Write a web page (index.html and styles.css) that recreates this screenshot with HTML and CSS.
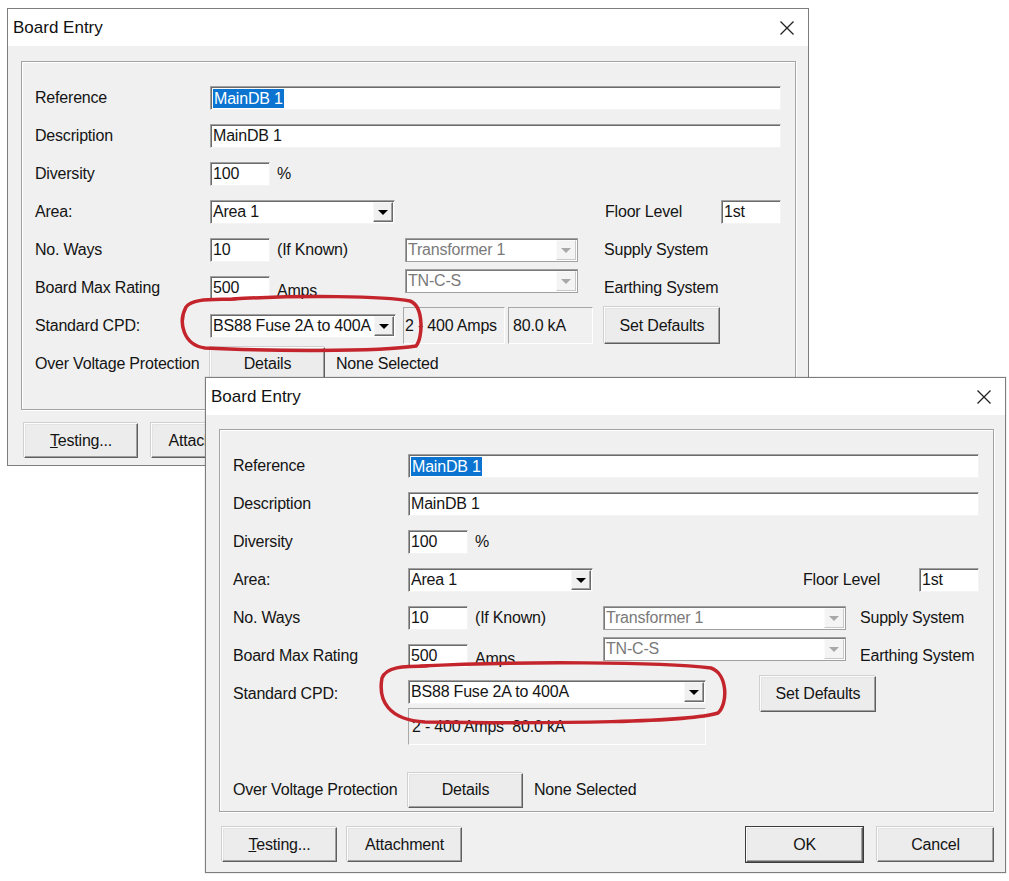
FILE: index.html
```html
<!DOCTYPE html>
<html lang="en">
<head>
<meta charset="utf-8">
<title>Board Entry</title>
<link rel="stylesheet" href="styles.css">
</head>
<body>
<div class="desk">

  <section class="win win-back">
    <header class="titlebar">
      <span class="title">Board Entry</span>
      <svg class="close" viewBox="0 0 14 14" width="14" height="14"><path d="M0.5 0.5 L13.5 13.5 M13.5 0.5 L0.5 13.5" stroke="#222" stroke-width="1.3" fill="none"/></svg>
    </header>
    <div class="client client-back">
      <div class="group group-back">
        <div class="form form-back">
          <span class="lbl">Reference</span>
          <div class="field span-all"><span class="sel">MainDB 1</span></div>

          <span class="lbl">Description</span>
          <div class="field span-all">MainDB 1</div>

          <span class="lbl">Diversity</span>
          <div class="pair"><div class="field short">100</div><span>%</span></div>

          <span class="lbl">Area:</span>
          <div class="field combo area"><span class="ctext">Area 1</span><span class="drop"></span></div>
          <div class="floor"><span>Floor Level</span><div class="field short">1st</div></div>

          <span class="lbl">No. Ways</span>
          <div class="pair"><div class="field short">10</div><span>(If Known)</span></div>
          <div class="field combo dis dis-back"><span class="ctext">Transformer 1</span><span class="drop"></span></div>
          <span class="side">Supply System</span>

          <span class="lbl">Board Max Rating</span>
          <div class="pair"><div class="field short">500</div><span class="low">Amps</span></div>
          <div class="field combo dis dis-back top"><span class="ctext">TN-C-S</span><span class="drop"></span></div>
          <span class="side">Earthing System</span>

          <span class="lbl">Standard CPD:</span>
          <div class="field combo cpd-back"><span class="ctext">BS88 Fuse 2A to 400A</span><span class="drop"></span></div>
          <div class="statics"><div class="static st-a">2 - 400 Amps</div><div class="static st-b">80.0 kA</div></div>
          <div class="btn btn-set">Set Defaults</div>

          <span class="lbl">Over Voltage Protection</span>
          <div class="ovp"><div class="btn btn-det">Details</div><span>None Selected</span></div>
        </div>
      </div>
      <div class="btnrow btnrow-back">
        <div class="btn"><span><u>T</u>esting...</span></div>
        <div class="btn">Attachment</div>
      </div>
    </div>
  </section>

  <section class="win win-front">
    <header class="titlebar">
      <span class="title">Board Entry</span>
      <svg class="close" viewBox="0 0 14 14" width="14" height="14"><path d="M0.5 0.5 L13.5 13.5 M13.5 0.5 L0.5 13.5" stroke="#222" stroke-width="1.3" fill="none"/></svg>
    </header>
    <div class="client client-front">
      <div class="group group-front">
        <div class="form form-front">
          <span class="lbl">Reference</span>
          <div class="field span-all"><span class="sel">MainDB 1</span></div>

          <span class="lbl">Description</span>
          <div class="field span-all">MainDB 1</div>

          <span class="lbl">Diversity</span>
          <div class="pair"><div class="field short">100</div><span>%</span></div>

          <span class="lbl">Area:</span>
          <div class="field combo area"><span class="ctext">Area 1</span><span class="drop"></span></div>
          <div class="floor"><span>Floor Level</span><div class="field short">1st</div></div>

          <span class="lbl">No. Ways</span>
          <div class="pair"><div class="field short">10</div><span>(If Known)</span></div>
          <div class="field combo dis dis-front"><span class="ctext">Transformer 1</span><span class="drop"></span></div>
          <span class="side">Supply System</span>

          <span class="lbl">Board Max Rating</span>
          <div class="pair"><div class="field short">500</div><span class="low">Amps</span></div>
          <div class="field combo dis dis-front top"><span class="ctext">TN-C-S</span><span class="drop"></span></div>
          <span class="side">Earthing System</span>

          <span class="lbl">Standard CPD:</span>
          <div class="cpd-block">
            <div class="cpd-col">
              <div class="field combo cpd-front"><span class="ctext">BS88 Fuse 2A to 400A</span><span class="drop"></span></div>
              <div class="static st-wide">2 - 400 Amps  80.0 kA</div>
            </div>
            <div class="btn btn-set btn-set-front">Set Defaults</div>
          </div>

          <span class="lbl r9">Over Voltage Protection</span>
          <div class="ovp r9"><div class="btn btn-det">Details</div><span>None Selected</span></div>
        </div>
      </div>
      <div class="btnrow btnrow-front">
        <div class="btn btn-w"><span><u>T</u>esting...</span></div>
        <div class="btn btn-w">Attachment</div>
        <div class="btnrow-right">
          <div class="btn btn-ok btn-default">OK</div>
          <div class="btn btn-ok">Cancel</div>
        </div>
      </div>
    </div>
  </section>

  <svg class="ink" viewBox="0 0 1009 881" width="1009" height="881">
    <path d="M232 299 C300 295 385 296 410 301 C424 306 423 338 416 346 C380 352 260 351 205 348 C183 345 178 322 186 307 C193 298 212 300 236 299" />
    <path d="M420 666 C520 661 660 662 711 668 C728 674 728 704 718 713 C690 722 560 724 425 722 C388 720 378 700 382 678 C386 667 402 666 428 666" />
  </svg>
</div>
</body>
</html>
```

FILE: styles.css
```css
html, body {
  margin: 0;
  padding: 0;
  background: #ffffff;
}

body {
  font-family: "Liberation Sans", Arial, sans-serif;
  font-size: 16px;
  letter-spacing: -0.2px;
  color: #141414;
}

.desk {
  position: relative;
  width: 1009px;
  height: 881px;
  overflow: hidden;
  background: #ffffff;
}

/* windows on the desktop */
.win {
  position: absolute;
  box-sizing: border-box;
  display: flex;
  flex-direction: column;
  background: #f0f0f0;
  border: 1px solid #7d7d7d;
}

.win-back {
  left: 7px;
  top: 8px;
  width: 802px;
  height: 458px;
}

.win-front {
  left: 205px;
  top: 377px;
  width: 801px;
  height: 496px;
  box-shadow: 0 0 0 1px rgba(0, 0, 0, 0.06);
}

.titlebar {
  flex: none;
  height: 37px;
  display: flex;
  align-items: center;
  justify-content: space-between;
  padding-left: 5px;
  background: #ffffff;
}

.title {
  font-size: 17px;
  letter-spacing: 0;
  color: #111;
}

.close {
  margin-right: 14px;
}

.client {
  flex: 1;
  display: flex;
  flex-direction: column;
  min-height: 0;
}

.client-back {
  padding: 15px 12px 7px 13px;
}

.client-front {
  padding: 14px 11px 10px 13px;
}

/* etched group box */
.group {
  box-sizing: border-box;
  border: 1px solid #a3a3a3;
  box-shadow: inset 1px 1px 0 #ffffff, 1px 1px 0 #ffffff;
}

.group-back {
  height: 349px;
  padding: 17px 14px 26px 13px;
}

.group-front {
  height: 383px;
  padding: 17px 14px 2px 13px;
}

.form {
  display: grid;
  align-items: center;
}

.form-back {
  grid-template-columns: 175px 195px 199px 1fr;
  grid-auto-rows: 38px;
}

.form-front {
  grid-template-columns: 175px 195px 257px 1fr;
  grid-template-rows: repeat(7, 38px) 58px 38px;
}

.lbl {
  grid-column: 1;
  white-space: nowrap;
}

.r9 {
  grid-row: 9;
}

.span-all {
  grid-column: 2 / -1;
}

.side {
  white-space: nowrap;
}

/* sunken fields */
.field {
  box-sizing: border-box;
  height: 24px;
  display: flex;
  align-items: center;
  padding: 0 2px 0 2px;
  background: #ffffff;
  border: 1px solid;
  border-color: #a0a0a0 #f4f4f4 #f4f4f4 #a0a0a0;
  box-shadow: inset 1px 1px 0 #6b6b6b;
  white-space: nowrap;
  overflow: hidden;
}

.field.short {
  width: 60px;
}

.sel {
  background: #0a74d0;
  color: #ffffff;
  padding: 0 1px;
  line-height: 19px;
}

.pair {
  display: flex;
  align-items: center;
  gap: 7px;
  white-space: nowrap;
}

.low {
  margin-top: 6px;
}

.floor {
  grid-column: 3 / -1;
  justify-self: end;
  display: flex;
  align-items: center;
  gap: 39px;
  white-space: nowrap;
}

/* combo boxes */
.combo {
  padding-right: 1px;
}

.ctext {
  flex: 1;
  min-width: 0;
  overflow: hidden;
}

.drop {
  flex: none;
  margin-left: auto;
  position: relative;
  box-sizing: border-box;
  width: 20px;
  height: 20px;
  background: #f0f0f0;
  border: 1px solid;
  border-color: #f7f7f7 #6b6b6b #6b6b6b #f7f7f7;
  box-shadow: inset -1px -1px 0 #a0a0a0;
}

.drop::after {
  content: "";
  position: absolute;
  left: 4px;
  top: 7px;
  border-left: 5px solid transparent;
  border-right: 5px solid transparent;
  border-top: 5px solid #000000;
}

.area {
  width: 185px;
}

.dis {
  color: #7a7a7a;
  box-shadow: inset 1px 1px 0 #7a7a7a;
  border-color: #a0a0a0 #a0a0a0 #a0a0a0 #a0a0a0;
}

.dis .drop {
  border-color: #fbfbfb #c8c8c8 #c8c8c8 #fbfbfb;
  box-shadow: none;
  background: #f4f4f4;
}

.dis .drop::after {
  border-top-color: #a8a8a8;
}

.dis-back {
  width: 173px;
}

.dis-front {
  width: 243px;
}

.top {
  align-self: start;
}

.cpd-back {
  width: 186px;
}

.cpd-front {
  width: 298px;
}

/* static (read only) fields */
.statics {
  align-self: start;
  display: flex;
  gap: 3px;
  margin-left: -2px;
}

.static {
  box-sizing: border-box;
  height: 37px;
  display: flex;
  align-items: center;
  border: 1px solid;
  border-color: #a8a8a8 #ffffff #ffffff #a8a8a8;
  white-space: pre;
}

.st-a {
  width: 102px;
  padding-left: 1px;
}

.st-b {
  width: 85px;
  padding-left: 4px;
}

.st-wide {
  width: 298px;
  padding-left: 3px;
}

.cpd-block {
  grid-column: 2 / -1;
  grid-row: 7 / span 2;
  align-self: start;
  display: flex;
  align-items: flex-start;
  gap: 54px;
}

.cpd-col {
  display: flex;
  flex-direction: column;
  gap: 4px;
  padding-top: 5px;
}

/* push buttons */
.btn {
  box-sizing: border-box;
  height: 35px;
  width: 114px;
  display: flex;
  align-items: center;
  justify-content: center;
  background: #ececec;
  border: 1px solid;
  border-color: #fdfdfd #5f5f5f #5f5f5f #fdfdfd;
  box-shadow: inset -1px -1px 0 #a0a0a0, inset 1px 1px 0 #e3e3e3, -1px -1px 0 #d0d0d0;
  white-space: nowrap;
  color: #141414;
}

.btn-set {
  width: 116px;
  height: 37px;
  align-self: start;
}

.btn-set-front {
  height: 36px;
  margin-top: 1px;
}

.btn-det {
  width: 115px;
}

.ovp {
  grid-column: 2 / -1;
  display: flex;
  align-items: center;
  gap: 11px;
  white-space: nowrap;
}

.btnrow {
  display: flex;
  align-items: center;
  padding-left: 3px;
}

.btnrow-back {
  margin-top: 13px;
  gap: 13px;
}

.btnrow-front {
  margin-top: 15px;
  gap: 10px;
}

.btn-w {
  width: 115px;
}

.btnrow-right {
  margin-left: auto;
  display: flex;
  gap: 14px;
}

.btn-ok {
  width: 117px;
}

.btn-default {
  outline: 1px solid #3c3c3c;
}

/* hand-drawn annotation over the screenshot */
.ink {
  position: absolute;
  left: 0;
  top: 0;
  pointer-events: none;
}

.ink path {
  fill: none;
  stroke: #c4242b;
  stroke-width: 3.5;
  stroke-linecap: round;
  stroke-linejoin: round;
}
```
